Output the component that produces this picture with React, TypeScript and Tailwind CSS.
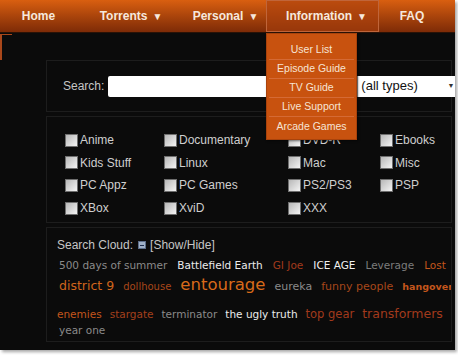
const navItems = [
  { label: "Home", w: "w-[77px]", arrow: false },
  { label: "Torrents", w: "w-[108px]", arrow: true },
  { label: "Personal", w: "w-[81px]", arrow: true },
];

const menu = ["User List", "Episode Guide", "TV Guide", "Live Support", "Arcade Games"];

const cats = [
  ["Anime", "Documentary", "DVD-R", "Ebooks"],
  ["Kids Stuff", "Linux", "Mac", "Misc"],
  ["PC Appz", "PC Games", "PS2/PS3", "PSP"],
  ["XBox", "XviD", "XXX", ""],
];

type Tag = { t: string; c: string };

const row1: Tag[] = [
  { t: "500 days of summer", c: "text-[10.5px] text-[#8a8a8a]" },
  { t: "Battlefield Earth", c: "text-[10.5px] text-[#ececec]" },
  { t: "GI Joe", c: "text-[10.5px] text-[#a23a1c]" },
  { t: "ICE AGE", c: "text-[10.5px] text-[#f2f2f2]" },
  { t: "Leverage", c: "text-[10.5px] text-[#7c7c7c]" },
  { t: "Lost", c: "text-[10.5px] text-[#c4561c]" },
];

const row2: Tag[] = [
  { t: "district 9", c: "text-[12.5px] text-[#d0651c]" },
  { t: "dollhouse", c: "text-[10px] text-[#a8471a]" },
  { t: "entourage", c: "text-[16.5px] text-[#d86a1a]" },
  { t: "eureka", c: "text-[11px] text-[#8a8a8a]" },
  { t: "funny people", c: "text-[11px] text-[#a8471a]" },
  { t: "hangover", c: "text-[9.5px] font-bold text-[#c4561c]" },
];

const row3: Tag[] = [
  { t: "enemies", c: "text-[10.5px] text-[#c4561c]" },
  { t: "stargate", c: "text-[10.5px] text-[#a4401c]" },
  { t: "terminator", c: "text-[10.5px] text-[#8a8a8a]" },
  { t: "the ugly truth", c: "text-[10.5px] text-[#ececec]" },
  { t: "top gear", c: "text-[11.5px] text-[#a23a1c]" },
  { t: "transformers", c: "text-[12.5px] text-[#a23a1c]" },
  { t: "twilight", c: "text-[25px] text-[#d86a1a]" },
];

const Check = () => (
  <span className="w-[13px] h-[13px] border border-[#6e6e6e] bg-gradient-to-br from-[#b8b8b8] to-[#f4f4f4] shrink-0" />
);

const TagRow = ({ tags, cls }: { tags: Tag[]; cls: string }) => (
  <div className={`flex items-baseline whitespace-nowrap leading-none ${cls}`}>
    {tags.map((t) => (
      <span key={t.t} className={t.c}>
        {t.t}
      </span>
    ))}
  </div>
);

const App = () => {
  return (
    <div className="w-[458px] h-[355px] bg-white overflow-hidden">
      <div className="relative w-[455px] h-[350px] bg-[#0b0b0b] shadow-[2px_2px_3px_rgba(0,0,0,0.35)] overflow-hidden font-['Liberation_Sans',sans-serif]">
        <nav className="flex h-[33px] bg-gradient-to-b from-[#d95f10] to-[#7e2b07] border-b border-[#2a1206] text-[12px] font-bold text-[#f6e8dc]">
          {navItems.map((n) => (
            <div key={n.label} className={`${n.w} flex items-center justify-center`}>
              {n.label}
              {n.arrow && <span className="ml-[5px] text-[10px]">▼</span>}
            </div>
          ))}
          <div className="w-[113px] flex items-center justify-center border border-[#c0653a] bg-[#a8400d]/60 pl-[8px]">
            Information<span className="ml-[5px] text-[10px]">▼</span>
          </div>
          <div className="w-[66px] flex items-center justify-center">FAQ</div>
        </nav>

        <div className="absolute left-0 top-[34px] w-[12px] h-[26px] border-l-2 border-t border-[#a9471a]" />

        <div className="absolute left-[266px] top-[33px] w-[91px] bg-[#c8520f] border border-[#a9430c] shadow-[1px_1px_2px_rgba(0,0,0,0.5)] px-[2px] pt-[7px] pb-[3px] z-10">
          {menu.map((m, i) => (
            <div
              key={m}
              className={`h-[19px] flex items-center justify-center text-[10.5px] text-[#f6e4d4] ${i < menu.length - 1 ? "border-b border-[#d56a35]" : ""}`}
            >
              {m}
            </div>
          ))}
        </div>

        <div className="pl-[46px] pr-[3px] pt-[27px] flex flex-col gap-[4px]">
          <div className="h-[52px] border border-[#1d1d1d] flex items-center pl-[16px]">
            <span className="text-[12px] text-[#c6c6c6] mr-[4px] shrink-0">Search:</span>
            <div className="w-[249px] h-[21px] bg-white rounded-l-[2px] shrink-0" />
            <div className="w-[100px] h-[21px] bg-white shrink-0 flex items-center justify-between pl-[3px] pr-[3px] text-[13px] text-[#111] border-l border-[#999]">
              <span>(all types)</span>
              <span className="text-[7px] text-[#333]">▼</span>
            </div>
          </div>

          <div className="h-[107px] border border-[#1d1d1d] pt-[14px] pl-[18px]">
            {cats.map((row, r) => (
              <div key={r} className="flex h-[22.7px] items-start">
                {row.map((c, i) => (
                  <div
                    key={i}
                    className={`${["w-[99px]", "w-[124px]", "w-[92px]", "w-[60px]"][i]} flex items-center gap-[1px] text-[12px] text-[#cfcfcf]`}
                  >
                    {c && (
                      <>
                        <Check />
                        <span className="ml-[1px]">{c}</span>
                      </>
                    )}
                  </div>
                ))}
              </div>
            ))}
          </div>

          <div className="h-[115px] border border-[#1d1d1d] pt-[9px] pl-[10px] overflow-hidden font-['DejaVu_Sans',sans-serif]">
            <div className="flex items-center text-[12px] text-[#c6c6c6] font-['Liberation_Sans',sans-serif] h-[16px]">
              <span>Search Cloud:</span>
              <span className="ml-[5px] w-[8px] h-[8px] bg-[#9fb0c8] border border-[#5c6e8a] flex items-center justify-center">
                <span className="w-[4px] h-[1px] bg-[#203050]" />
              </span>
              <span className="ml-[4px]">[Show/Hide]</span>
            </div>
            <TagRow tags={row1} cls="gap-[10px] pl-[2px] mt-[7px]" />
            <TagRow tags={row2} cls="gap-[9px] pl-[2px] mt-[6px]" />
            <TagRow tags={row3} cls="gap-[8px] mt-[4px]" />
            <div className="text-[10.5px] text-[#8a8a8a] pl-[2px] leading-none mt-[3px]">year one</div>
          </div>
        </div>
      </div>
    </div>
  );
};

export default App;
